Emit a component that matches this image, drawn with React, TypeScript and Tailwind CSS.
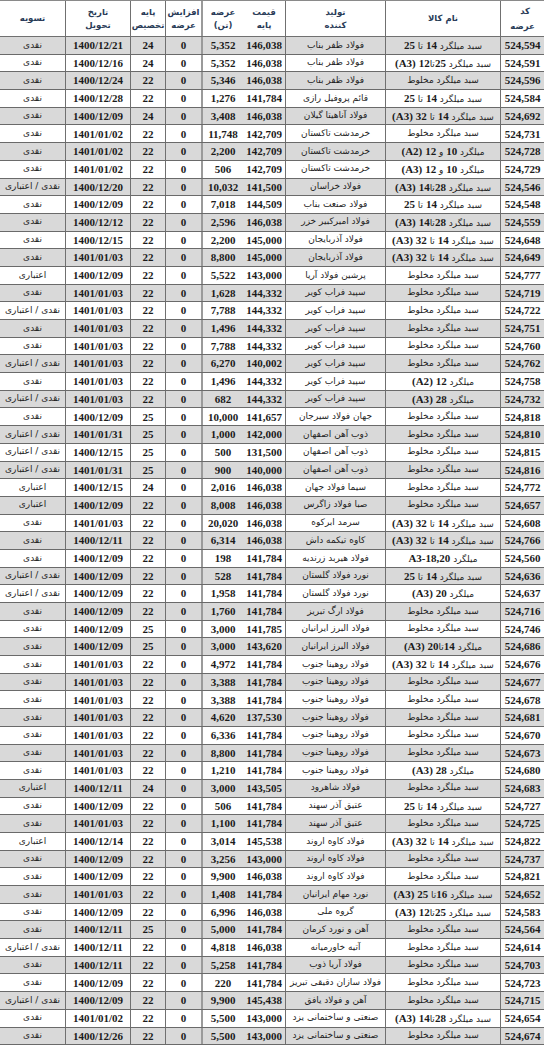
const rows: string[][] = [
  ["524,594", "سبد میلگرد 14 تا 25", "فولاد ظفر بناب", "146,038", "5,352", "24", "1400/12/21", "نقدی"],
  ["524,591", "سبد میلگرد 25تا12 (A3)", "فولاد ظفر بناب", "146,038", "5,352", "24", "1400/12/16", "نقدی"],
  ["524,596", "سبد میلگرد مخلوط", "فولاد ظفر بناب", "146,038", "5,346", "22", "1400/12/24", "نقدی"],
  ["524,584", "سبد میلگرد 14 تا 25", "قائم پروفیل رازی", "141,784", "1,276", "22", "1400/12/28", "نقدی"],
  ["524,692", "سبد میلگرد 14 تا 32  (A3)", "فولاد آناهیتا گیلان", "146,038", "3,408", "24", "1400/12/09", "نقدی"],
  ["524,731", "سبد میلگرد مخلوط", "خرمدشت تاکستان", "142,709", "11,748", "22", "1401/01/02", "نقدی"],
  ["524,728", "میلگرد 10 و 12  (A2)", "خرمدشت تاکستان", "142,709", "2,200", "22", "1401/01/02", "نقدی"],
  ["524,729", "میلگرد 10 و 12  (A3)", "خرمدشت تاکستان", "142,709", "506", "22", "1401/01/02", "نقدی"],
  ["524,546", "سبد میلگرد 28تا14 (A3)", "فولاد خراسان", "141,500", "10,032", "22", "1400/12/20", "نقدی / اعتباری"],
  ["524,548", "سبد میلگرد 14 تا 25", "فولاد صنعت بناب", "144,509", "7,018", "22", "1400/12/09", "نقدی"],
  ["524,559", "سبد میلگرد 28تا14 (A3)", "فولاد امیرکبیر خزر", "146,038", "2,596", "22", "1400/12/12", "نقدی"],
  ["524,648", "سبد میلگرد 14 تا 32  (A3)", "فولاد آذربایجان", "145,000", "2,200", "22", "1400/12/15", "نقدی"],
  ["524,649", "سبد میلگرد 14 تا 32  (A3)", "فولاد آذربایجان", "145,000", "8,800", "22", "1401/01/03", "نقدی"],
  ["524,777", "سبد میلگرد مخلوط", "پرشین فولاد آریا", "143,000", "5,522", "22", "1400/12/09", "اعتباری"],
  ["524,719", "سبد میلگرد مخلوط", "سپید فراب کویر", "144,332", "1,628", "22", "1401/01/03", "نقدی"],
  ["524,722", "سبد میلگرد مخلوط", "سپید فراب کویر", "144,332", "7,788", "22", "1401/01/03", "نقدی / اعتباری"],
  ["524,751", "سبد میلگرد مخلوط", "سپید فراب کویر", "144,332", "1,496", "22", "1401/01/03", "نقدی"],
  ["524,760", "سبد میلگرد مخلوط", "سپید فراب کویر", "144,332", "7,788", "22", "1401/01/03", "نقدی"],
  ["524,762", "سبد میلگرد مخلوط", "سپید فراب کویر", "140,002", "6,270", "22", "1401/01/03", "نقدی / اعتباری"],
  ["524,758", "میلگرد 12 (A2)", "سپید فراب کویر", "144,332", "1,496", "22", "1401/01/03", "نقدی"],
  ["524,732", "میلگرد 28  (A3)", "سپید فراب کویر", "144,332", "682", "22", "1401/01/03", "نقدی / اعتباری"],
  ["524,818", "سبد میلگرد مخلوط", "جهان فولاد سیرجان", "141,657", "10,000", "25", "1400/12/09", "نقدی"],
  ["524,810", "سبد میلگرد مخلوط", "ذوب آهن اصفهان", "142,000", "1,000", "25", "1401/01/31", "نقدی / اعتباری"],
  ["524,815", "سبد میلگرد مخلوط", "ذوب آهن اصفهان", "131,500", "500", "25", "1400/12/15", "نقدی / اعتباری"],
  ["524,816", "سبد میلگرد مخلوط", "ذوب آهن اصفهان", "140,000", "900", "25", "1401/01/31", "نقدی / اعتباری"],
  ["524,772", "سبد میلگرد مخلوط", "سیما فولاد جهان", "146,038", "2,016", "24", "1400/12/15", "اعتباری"],
  ["524,657", "سبد میلگرد مخلوط", "صبا فولاد زاگرس", "146,038", "8,008", "22", "1400/12/09", "اعتباری"],
  ["524,608", "سبد میلگرد 14 تا 32  (A3)", "سرمد ابرکوه", "146,038", "20,020", "22", "1401/01/03", "نقدی"],
  ["524,766", "سبد میلگرد 14 تا 32  (A3)", "کاوه تیکمه داش", "146,038", "6,314", "22", "1400/12/11", "نقدی"],
  ["524,560", "میلگرد A3-18,20", "فولاد هیربد زرندیه", "141,784", "198", "22", "1400/12/09", "نقدی"],
  ["524,636", "سبد میلگرد 14 تا 25", "نورد فولاد گلستان", "141,784", "528", "22", "1400/12/09", "نقدی / اعتباری"],
  ["524,637", "میلگرد 20 (A3)", "نورد فولاد گلستان", "141,784", "1,958", "22", "1400/12/09", "نقدی / اعتباری"],
  ["524,716", "سبد میلگرد مخلوط", "فولاد ارگ تبریز", "141,784", "1,760", "22", "1400/12/09", "نقدی"],
  ["524,746", "سبد میلگرد مخلوط", "فولاد البرز ایرانیان", "141,785", "3,000", "25", "1400/12/09", "نقدی"],
  ["524,686", "میلگرد 14تا20 (A3)", "فولاد البرز ایرانیان", "143,620", "3,000", "25", "1400/12/09", "نقدی"],
  ["524,676", "سبد میلگرد 14 تا 32  (A3)", "فولاد روهینا جنوب", "141,784", "4,972", "22", "1401/01/03", "نقدی"],
  ["524,677", "سبد میلگرد مخلوط", "فولاد روهینا جنوب", "141,784", "3,388", "22", "1401/01/03", "نقدی"],
  ["524,678", "سبد میلگرد مخلوط", "فولاد روهینا جنوب", "141,784", "3,388", "22", "1401/01/03", "نقدی"],
  ["524,681", "سبد میلگرد مخلوط", "فولاد روهینا جنوب", "137,530", "4,620", "22", "1401/01/03", "نقدی"],
  ["524,670", "سبد میلگرد مخلوط", "فولاد روهینا جنوب", "141,784", "6,336", "22", "1401/01/03", "نقدی"],
  ["524,673", "سبد میلگرد مخلوط", "فولاد روهینا جنوب", "141,784", "8,800", "22", "1401/01/03", "نقدی"],
  ["524,680", "میلگرد 28  (A3)", "فولاد روهینا جنوب", "141,784", "1,210", "22", "1401/01/03", "نقدی"],
  ["524,683", "سبد میلگرد مخلوط", "فولاد شاهرود", "143,505", "3,000", "24", "1400/12/11", "اعتباری"],
  ["524,727", "سبد میلگرد 14 تا 25", "عتیق آذر سهند", "141,784", "506", "22", "1400/12/09", "نقدی"],
  ["524,725", "سبد میلگرد مخلوط", "عتیق آذر سهند", "141,784", "1,100", "22", "1401/01/03", "نقدی"],
  ["524,822", "سبد میلگرد 14 تا 32  (A3)", "فولاد کاوه اروند", "145,538", "3,014", "22", "1400/12/14", "اعتباری"],
  ["524,737", "سبد میلگرد مخلوط", "فولاد کاوه اروند", "143,000", "3,256", "22", "1400/12/09", "نقدی"],
  ["524,821", "سبد میلگرد مخلوط", "فولاد کاوه اروند", "146,038", "9,900", "22", "1400/12/09", "نقدی"],
  ["524,652", "سبد میلگرد 16تا 25  (A3)", "نورد مهام ایرانیان", "141,784", "1,408", "22", "1401/01/03", "نقدی"],
  ["524,583", "سبد میلگرد 25تا12 (A3)", "گروه ملی", "146,038", "6,996", "22", "1400/12/09", "نقدی"],
  ["524,564", "سبد میلگرد مخلوط", "آهن و نورد کرمان", "141,784", "5,000", "25", "1400/12/11", "نقدی"],
  ["524,614", "سبد میلگرد مخلوط", "آتیه خاورمیانه", "146,038", "4,818", "22", "1400/12/11", "نقدی / اعتباری"],
  ["524,703", "سبد میلگرد مخلوط", "فولاد آریا ذوب", "141,784", "5,258", "22", "1400/12/11", "نقدی"],
  ["524,723", "سبد میلگرد مخلوط", "فولاد سازان دقیقی تبریز", "141,784", "220", "22", "1400/12/09", "نقدی"],
  ["524,715", "سبد میلگرد مخلوط", "آهن و فولاد یافق", "145,438", "9,900", "22", "1400/12/09", "نقدی / اعتباری"],
  ["524,654", "سبد میلگرد 28تا14 (A3)", "صنعتی و ساختمانی یزد", "143,000", "5,500", "22", "1401/01/02", "نقدی"],
  ["524,674", "سبد میلگرد مخلوط", "صنعتی و ساختمانی یزد", "143,000", "5,500", "22", "1400/12/26", "نقدی"],
];

const grid = "grid grid-cols-[44px_115px_100px_42px_42px_36px_35px_65px_65px]";
const num = "font-['Liberation_Serif',serif] font-bold text-[11px] text-[#1b1b1b]";
const fa = "font-['DejaVu_Sans',sans-serif] text-[9px] text-[#1f1f1f]";

// persian text with latin digits in the serif face
function Mixed({ t }: { t: string }) {
  return (
    <>
      {t.split(/([0-9A-Za-z(),.\-]+)/).map((p, i) =>
        /[0-9A-Za-z]/.test(p) ? (
          <span key={i} className={num}>{p}</span>
        ) : (
          <span key={i}>{p}</span>
        )
      )}
    </>
  );
}

const line = "border-l border-[#707070]";

function Head({ a, b, cls }: { a: string; b?: string; cls: string }) {
  return (
    <div className={`flex flex-col items-center justify-center gap-[5px] leading-none ${cls}`}>
      <span>{a}</span>
      {b && <span>{b}</span>}
    </div>
  );
}

export default function App() {
  return (
    <div dir="rtl" className="w-[544px] bg-white border-t border-[#8a8a8a]">
      <div className={`${grid} h-[36px] border-b border-[#707070] font-['DejaVu_Sans',sans-serif] text-[8.5px] font-bold text-[#2a3c58]`}>
        <div className={`flex flex-col items-center justify-between py-[6px] leading-none ${line}`}>
          <span className="self-start pr-[14px]">کد</span>
          <span>عرضه</span>
        </div>
        <Head a="نام کالا" cls={line} />
        <Head a="تولید" b="کننده" cls={line} />
        <Head a="قیمت" b="پایه" cls="" />
        <Head a="عرضه" b="(تن)" cls="border-l-2 border-[#9a9a9a]" />
        <Head a="افزایش" b="عرضه" cls={line} />
        <Head a="پایه" b="تخصیص" cls={line} />
        <Head a="تاریخ" b="تحویل" cls={line} />
        <Head a="تسویه" cls="" />
      </div>
      {rows.map((r, i) => (
        <div
          key={r[0]}
          className={`${grid} h-[17.7px] border-b border-[#6a6a6a] ${i % 2 === 0 ? "bg-[#d9d9d9]" : "bg-white"}`}
        >
          <div className={`flex items-center justify-center ${num} ${line}`}>{r[0]}</div>
          <div className={`flex items-center justify-center whitespace-nowrap ${fa} ${line}`}>
            <span><Mixed t={r[1]} /></span>
          </div>
          <div className={`flex items-center justify-center whitespace-nowrap ${fa} ${line}`}>{r[2]}</div>
          <div className={`flex items-center justify-center ${num}`}>{r[3]}</div>
          <div className={`flex items-center justify-center ${num} border-l-2 border-[#9a9a9a]`}>{r[4]}</div>
          <div className={`flex items-center justify-center ${num} ${line}`}>0</div>
          <div className={`flex items-center justify-center ${num} ${line}`}>{r[5]}</div>
          <div className={`flex items-center justify-center ${num} ${line}`}>{r[6]}</div>
          <div className={`flex items-center justify-center whitespace-nowrap ${fa}`}>{r[7]}</div>
        </div>
      ))}
    </div>
  );
}
